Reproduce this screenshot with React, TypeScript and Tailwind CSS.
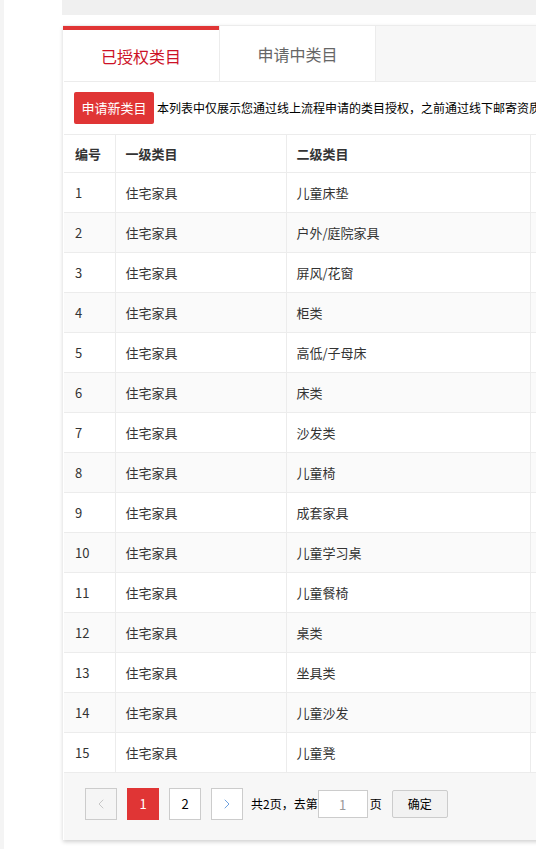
import { ChevronLeft, ChevronRight } from "lucide-react";

const rows = [
  "儿童床垫",
  "户外/庭院家具",
  "屏风/花窗",
  "柜类",
  "高低/子母床",
  "床类",
  "沙发类",
  "儿童椅",
  "成套家具",
  "儿童学习桌",
  "儿童餐椅",
  "桌类",
  "坐具类",
  "儿童沙发",
  "儿童凳",
];

const font = { fontFamily: '"Noto Sans CJK SC", "Noto Sans", sans-serif' };

export default function App() {
  return (
    <div className="flex w-[536px] h-[849px] overflow-hidden bg-white text-[#333]" style={font}>
      <div className="w-[4px] shrink-0 bg-[#f4f4f4]" />
      <div className="w-[58px] shrink-0" />
      <div className="flex-1 min-w-0">
        <div className="h-[15px] bg-[#f0f0f0]" />
        <div className="mt-[10px] ml-px w-[720px] bg-white shadow-[0_2px_4px_rgba(0,0,0,0.18)] border-t border-[#ececec]">
          {/* tabs */}
          <div className="flex h-[55px] bg-[#f7f7f7]">
            <div className="w-[156px] bg-white border-t-4 border-[#e03535] flex items-center justify-center text-[16px] text-[#cc1126]">
              已授权类目
            </div>
            <div className="w-[157px] bg-white border-x border-[#ececec] flex items-center justify-center text-[16px] text-[#666]">
              申请中类目
            </div>
          </div>

          <div className="border-t border-[#ececec] ml-px">
            <div className="flex items-center h-[52px] pl-[10px] gap-[3px]">
              <button className="w-[80px] h-[32px] rounded-[2px] bg-[#e03535] text-white text-[13px]">申请新类目</button>
              <span className="text-[12px] text-black whitespace-nowrap">
                本列表中仅展示您通过线上流程申请的类目授权，之前通过线下邮寄资质申请的类目授权不在此列表中展示
              </span>
            </div>

            <table className="w-full border-collapse text-[13px]">
              <thead>
                <tr className="h-[38px] border-y border-[#ececec] text-left">
                  <th className="w-[51px] pl-[11px] font-bold">编号</th>
                  <th className="w-[171px] pl-[10px] border-l border-[#ececec] font-bold">一级类目</th>
                  <th className="w-[244px] pl-[10px] border-l border-[#ececec] font-bold">二级类目</th>
                  <th className="border-l border-[#ececec]"></th>
                </tr>
              </thead>
              <tbody>
                {rows.map((r, i) => (
                  <tr key={r} className={`h-[40px] border-b border-[#ececec] ${i % 2 === 1 ? "bg-[#fafafa]" : "bg-white"}`}>
                    <td className="pl-[11px]">{i + 1}</td>
                    <td className="pl-[10px] border-l border-[#ececec]">住宅家具</td>
                    <td className="pl-[10px] border-l border-[#ececec]">{r}</td>
                    <td className="border-l border-[#ececec]"></td>
                  </tr>
                ))}
              </tbody>
            </table>

            {/* pagination */}
            <div className="flex items-center h-[67px] bg-[#f7f7f7] pl-[21px] pb-[5px] text-[13px]">
              <button className="w-[32px] h-[32px] border border-[#ccc] bg-[#f5f5f5] flex items-center justify-center text-[#bbb]">
                <ChevronLeft className="w-[16px] h-[16px]" strokeWidth={1.2} />
              </button>
              <button className="ml-[10px] w-[32px] h-[32px] bg-[#e03535] text-white">1</button>
              <button className="ml-[10px] w-[32px] h-[32px] border border-[#ccc] bg-white text-black">2</button>
              <button className="ml-[10px] w-[32px] h-[32px] border border-[#ccc] bg-white flex items-center justify-center text-[#4a8ad8]">
                <ChevronRight className="w-[16px] h-[16px]" strokeWidth={1.2} />
              </button>
              <span className="ml-[8px] text-[12px] text-black">共2页，去第</span>
              <input
                readOnly
                value="1"
                className="w-[50px] h-[28px] border border-[#ccc] bg-white text-center text-[#999] outline-none"
              />
              <span className="ml-[2px] text-[12px] text-black">页</span>
              <button className="ml-[10px] w-[56px] h-[28px] border border-[#ccc] rounded-[2px] bg-[#f2f2f2] text-[12px] text-black">确定</button>
            </div>
          </div>
        </div>
      </div>
    </div>
  );
}
